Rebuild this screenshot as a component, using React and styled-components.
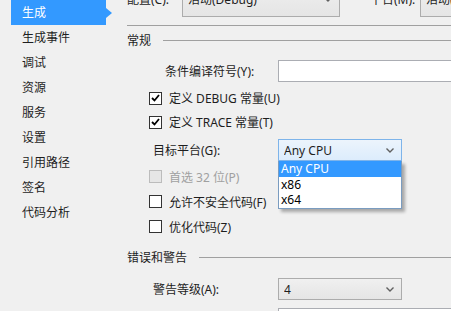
import React from 'react';
import styled, { createGlobalStyle, css } from 'styled-components';

const GlobalStyle = createGlobalStyle`
  html, body {
    margin: 0;
    padding: 0;
    background: #f0f0f0;
  }
  body {
    font-family: "Noto Sans", "Noto Sans CJK SC", sans-serif;
    font-size: 12px;
    color: #1e1e1e;
  }
`;

const Page = styled.div`
  display: flex;
  width: 451px;
  height: 311px;
  overflow: hidden;
  background: #f0f0f0;
`;

const Sidebar = styled.div`
  flex: 0 0 100px;
  padding-left: 11px;
  display: flex;
  flex-direction: column;
`;

const NavItem = styled.div`
  position: relative;
  flex: 0 0 25px;
  width: 95px;
  line-height: 25px;
  padding-left: 11px;
  box-sizing: border-box;
  white-space: nowrap;
  color: #1e1e1e;

  ${p => p.$active && css`
    background: #3399ff;
    color: #fff;

    &::after {
      content: '';
      position: absolute;
      right: -6px;
      top: 8px;
      border-top: 5px solid transparent;
      border-bottom: 5px solid transparent;
      border-left: 6px solid #3399ff;
    }
  `}
`;

const Content = styled.div`
  flex: 1;
  min-width: 0;
  padding-left: 16px;
  display: flex;
  flex-direction: column;

  & > * {
    flex-shrink: 0;
  }
`;

const Row = styled.div`
  display: flex;
  align-items: center;
  height: ${p => p.$h || 22}px;
  margin-top: ${p => p.$mt || 0}px;
  padding-left: ${p => p.$indent || 0}px;
  white-space: nowrap;
`;

const TopRow = styled(Row)`
  height: 36px;
  margin-top: -19px;
`;

const Label = styled.span`
  width: ${p => (p.$w ? `${p.$w}px` : 'auto')};
  margin-left: ${p => p.$ml || 0}px;
  flex: 0 0 auto;
  color: ${p => (p.$disabled ? '#a0a0a0' : '#1e1e1e')};
`;

const Divider = styled.div`
  height: 1px;
  background: #a0a0a0;
  margin-top: ${p => p.$mt || 0}px;
`;

const Section = styled.div`
  display: flex;
  align-items: center;
  height: 28px;
  margin-top: ${p => p.$mt || 0}px;
  white-space: nowrap;

  &::after {
    content: '';
    flex: 1;
    height: 1px;
    background: #a0a0a0;
    margin-left: 12px;
  }
`;

const ComboWrap = styled.div`
  position: relative;
  flex: 0 0 auto;
`;

const Combo = styled.div`
  flex: 0 0 auto;
  width: ${p => p.$w}px;
  height: ${p => p.$h || 22}px;
  box-sizing: border-box;
  display: flex;
  align-items: center;
  padding: 0 7px 0 5px;
  border: 1px solid #acacac;
  background: linear-gradient(#f0f0f0, #e5e5e5);
  color: #1e1e1e;

  ${p => p.$hot && css`
    border-color: #7eb4ea;
    background: linear-gradient(#ecf4fc, #dcecfc);
  `}
`;

const ComboText = styled.span`
  flex: 1;
  overflow: hidden;
`;

const TextBox = styled.div`
  flex: 1;
  height: 22px;
  box-sizing: border-box;
  border: 1px solid #abadb3;
  background: #fff;
  margin-right: -40px;
`;

const DropList = styled.div`
  position: absolute;
  left: 0;
  top: 22px;
  width: 124px;
  box-sizing: border-box;
  border: 1px solid #7a9cc0;
  border-top: none;
  background: #fff;
  box-shadow: 3px 3px 3px rgba(0, 0, 0, 0.3);
  z-index: 2;
`;

const DropItem = styled.div`
  height: 15.5px;
  line-height: 15px;
  padding-left: 2px;
  color: ${p => (p.$sel ? '#fff' : '#000')};
  background: ${p => (p.$sel ? '#3399ff' : 'transparent')};
`;

const Box = styled.span`
  flex: 0 0 auto;
  width: 13px;
  height: 13px;
  box-sizing: border-box;
  border: 1px solid ${p => (p.$disabled ? '#bcbcbc' : '#333')};
  background: ${p => (p.$disabled ? '#e6e6e6' : '#fff')};
  margin-right: 7px;
  display: flex;
  align-items: center;
  justify-content: center;
`;

const Chevron = () => (
  <svg width="8" height="5" viewBox="0 0 8 5">
    <path d="M0.5 0.5 L4 4 L7.5 0.5" fill="none" stroke="#606060" strokeWidth="1.4" />
  </svg>
);

const Check = ({ checked, disabled, h = 25, children }) => (
  <Row $h={h} $indent={22}>
    <Box $disabled={disabled}>
      {checked && (
        <svg width="9" height="8" viewBox="0 0 9 8">
          <path d="M1 4 L3.5 6.5 L8 1" fill="none" stroke="#000" strokeWidth="1.8" />
        </svg>
      )}
    </Box>
    <Label $disabled={disabled}>{children}</Label>
  </Row>
);

const navItems = ['生成', '生成事件', '调试', '资源', '服务', '设置', '引用路径', '签名', '代码分析'];

export default function App() {
  return (
    <>
      <GlobalStyle />
      <Page>
        <Sidebar>
          {navItems.map((n, i) => (
            <NavItem key={n} $active={i === 0}>{n}</NavItem>
          ))}
        </Sidebar>
        <Content>
          <TopRow>
            <Label $w={55}>配置(C):</Label>
            <Combo $w={158} $h={36}>
              <ComboText>活动(Debug)</ComboText>
              <Chevron />
            </Combo>
            <Label $w={50} $ml={30}>平台(M):</Label>
            <Combo $w={120} $h={36}>
              <ComboText>活动(Any CPU)</ComboText>
              <Chevron />
            </Combo>
          </TopRow>
          <Divider $mt={8} />
          <Section>常规</Section>
          <Row $mt={6} $indent={38}>
            <Label $w={113}>条件编译符号(Y):</Label>
            <TextBox />
          </Row>
          <div style={{ height: 4 }} />
          <Check checked h={24}>定义 DEBUG 常量(U)</Check>
          <Check checked h={24}>定义 TRACE 常量(T)</Check>
          <Row $mt={5} $indent={26}>
            <Label $w={125}>目标平台(G):</Label>
            <ComboWrap>
              <Combo $w={124} $hot>
                <ComboText>Any CPU</ComboText>
                <Chevron />
              </Combo>
              <DropList>
                <DropItem $sel>Any CPU</DropItem>
                <DropItem>x86</DropItem>
                <DropItem>x64</DropItem>
              </DropList>
            </ComboWrap>
          </Row>
          <div style={{ height: 3 }} />
          <Check disabled>首选 32 位(P)</Check>
          <Check>允许不安全代码(F)</Check>
          <Check>优化代码(Z)</Check>
          <Section $mt={4}>错误和警告</Section>
          <Row $mt={7} $indent={26}>
            <Label $w={125}>警告等级(A):</Label>
            <Combo $w={124}>
              <ComboText>4</ComboText>
              <Chevron />
            </Combo>
          </Row>
          <Row $mt={8} $indent={151}>
            <TextBox />
          </Row>
        </Content>
      </Page>
    </>
  );
}
